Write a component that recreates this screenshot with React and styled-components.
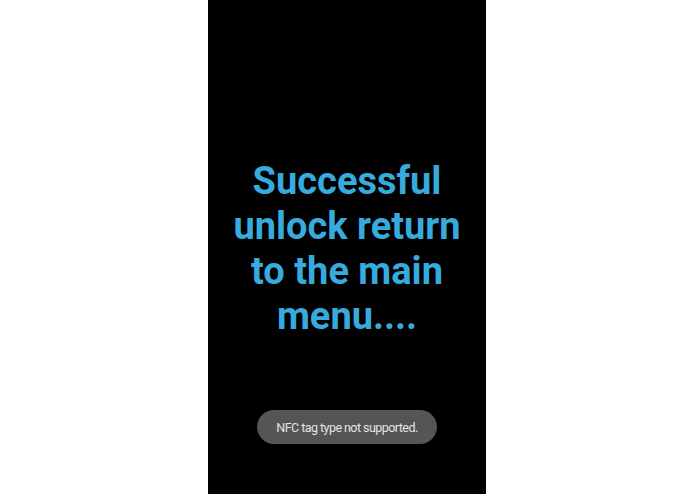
import React from "react";
import styled, { createGlobalStyle } from "styled-components";

const GlobalStyle = createGlobalStyle`
  html, body {
    margin: 0;
    padding: 0;
    background: #fff;
  }
`;

const Page = styled.div`
  height: 494px;
  display: flex;
  justify-content: center;
  background: #fff;
  padding-right: 1px;
  box-sizing: border-box;
`;

const Screen = styled.div`
  width: 278px;
  height: 100%;
  background: #000;
  display: flex;
  flex-direction: column;
  align-items: center;
`;

const Message = styled.h1`
  margin: 159px 0 0;
  font-family: Roboto, "Liberation Sans", sans-serif;
  font-weight: 700;
  font-size: 38px;
  line-height: 45px;
  color: #37abdd;
  text-align: center;
  width: 250px;
`;

const Toast = styled.div`
  margin-top: 71px;
  height: 34px;
  padding: 0 19px;
  display: flex;
  align-items: center;
  border-radius: 17px;
  background: #555555;
  color: #e4e4e4;
  font-family: Roboto, "Liberation Sans", sans-serif;
  font-size: 12.5px;
  letter-spacing: -0.55px;
  box-sizing: border-box;
`;

export default function App() {
  return (
    <>
      <GlobalStyle />
      <Page>
        <Screen>
          <Message>Successful unlock return to the main menu....</Message>
          <Toast>NFC tag type not supported.</Toast>
        </Screen>
      </Page>
    </>
  );
}
